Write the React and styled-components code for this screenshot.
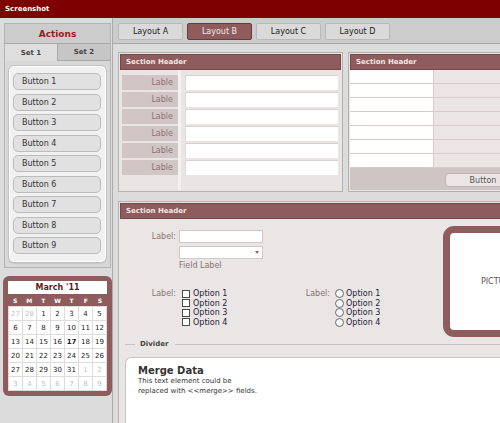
import React from "react";
import styled, { createGlobalStyle } from "styled-components";

const GlobalStyle = createGlobalStyle`
  html, body {
    margin: 0;
    padding: 0;
    overflow: hidden;
    background: #dcdcdc;
  }
  body {
    font-family: "DejaVu Sans", Verdana, sans-serif;
  }
  * {
    box-sizing: border-box;
  }
`;

const Screen = styled.div`
  width: 500px;
  height: 423px;
  overflow: hidden;
  display: flex;
  flex-direction: column;
  background: #dcdcdc;
`;

const TitleBar = styled.div`
  height: 18px;
  flex: none;
  background: #7f0000;
  color: #ffffff;
  font-weight: bold;
  font-size: 7px;
  padding-left: 5px;
  display: flex;
  align-items: center;
`;

const Workspace = styled.div`
  flex: 1;
  display: flex;
  min-height: 0;
`;

const Sidebar = styled.aside`
  width: 113px;
  flex: none;
  padding: 5px 1px 0 4px;
  border-right: 1px solid #ababab;
  display: flex;
  flex-direction: column;
  gap: 8px;
`;

const ActionsPanel = styled.div`
  border: 1px solid #b3b3b3;
  background: #d5d5d5;
`;

const ActionsTitle = styled.div`
  height: 20px;
  background: #cccccc;
  border-bottom: 1px solid #a8a8a8;
  color: #9a1c1c;
  font-weight: bold;
  font-size: 9px;
  display: flex;
  align-items: center;
  justify-content: center;
`;

const SetTabs = styled.div`
  display: flex;
  height: 17px;
`;

const SetTab = styled.div`
  flex: 1;
  display: flex;
  align-items: center;
  justify-content: center;
  font-size: 7px;
  font-weight: bold;
  color: #444;
  background: ${({ active }) => (active ? "#dedede" : "#c6c6c6")};
  border-left: ${({ active }) => (active ? "none" : "1px solid #a9a9a9")};
  border-bottom: ${({ active }) => (active ? "none" : "1px solid #a9a9a9")};
`;

const ListWrap = styled.div`
  padding: 4px 3px 4px 3px;
  background: #d8d8d8;
`;

const ButtonList = styled.div`
  background: #f1f1f1;
  border: 1px solid #c2c2c2;
  border-radius: 6px;
  box-shadow: inset 0 0 0 1px #ffffff, 0 1px 1px rgba(0, 0, 0, 0.08);
  padding: 7px 5px 8px 4px;
  display: flex;
  flex-direction: column;
  gap: 3.5px;
`;

const ActionButton = styled.div`
  height: 17px;
  background: #e1e1e1;
  border: 1px solid #bcbcbc;
  border-radius: 5px;
  font-size: 8px;
  color: #333;
  padding-left: 8px;
  display: flex;
  align-items: center;
`;

const Calendar = styled.div`
  width: 109px;
  margin-left: -1px;
  background: #8e5c5c;
  border-radius: 6px;
  padding: 5px;
`;

const CalTitle = styled.div`
  height: 13px;
  background: #ffffff;
  color: #5b1f1f;
  font-weight: bold;
  font-size: 8px;
  display: flex;
  align-items: center;
  justify-content: center;
`;

const CalHead = styled.div`
  display: grid;
  grid-template-columns: repeat(7, 1fr);
  height: 12px;
  align-items: center;
  color: #ffffff;
  font-size: 6px;
  font-weight: bold;
  text-align: center;
`;

const CalGrid = styled.div`
  display: grid;
  grid-template-columns: repeat(7, 13px);
  grid-auto-rows: 13px;
  gap: 1px;
  padding: 1px;
  background: #dddddd;
`;

const CalCell = styled.div`
  background: #ffffff;
  font-size: 7px;
  display: flex;
  align-items: center;
  justify-content: center;
  color: ${({ muted }) => (muted ? "#c2c2c2" : "#222")};
  font-weight: ${({ today }) => (today ? "bold" : "normal")};
`;

const Main = styled.main`
  flex: 1;
  min-width: 0;
  overflow: hidden;
  display: flex;
  flex-direction: column;
`;

const TabStrip = styled.div`
  height: 26px;
  flex: none;
  background: #cccccc;
  border-bottom: 1px solid #a9a9a9;
  padding: 5px 0 0 5px;
  display: flex;
  gap: 4px;
  align-items: flex-start;
`;

const LayoutTab = styled.div`
  width: 65px;
  flex: none;
  height: 17px;
  font-size: 8px;
  display: flex;
  align-items: center;
  justify-content: center;
  border-radius: 2px;
  border: 1px solid ${({ active }) => (active ? "#6a3b3b" : "#b9b9b9")};
  background: ${({ active }) => (active ? "#8e5c5c" : "#dadada")};
  color: ${({ active }) => (active ? "#f4eaea" : "#222")};
`;

const Content = styled.div`
  padding: 8px 0 0 5px;
  display: flex;
  flex-direction: column;
  gap: 9px;
  width: 470px;
`;

const PanelRow = styled.div`
  display: flex;
  gap: 5px;
`;

const Panel = styled.section`
  width: ${({ w }) => w}px;
  height: ${({ h }) => h}px;
  flex: none;
  border: 1px solid #b1b1b1;
  background: #e9e5e5;
  padding: 1px;
  display: flex;
  flex-direction: column;
`;

const PanelHeader = styled.div`
  height: 16px;
  flex: none;
  background: #8e5c5c;
  border: 1px solid #764747;
  color: #f1e6e6;
  font-size: 7px;
  font-weight: bold;
  padding-left: 5px;
  display: flex;
  align-items: center;
`;

const FormBody = styled.div`
  flex: 1;
  padding: 5px 0 0 2px;
  display: grid;
  grid-template-columns: 56px 153px;
  grid-auto-rows: 15px;
  column-gap: 7px;
  row-gap: 2px;
  align-content: start;
  background: linear-gradient(
      to right,
      transparent 58px,
      #f4f1f1 58px,
      #f4f1f1 61px,
      transparent 61px
    ),
    #e9e5e5;
`;

const LabelCell = styled.div`
  background: #d1c5c5;
  color: #8c7272;
  font-size: 8px;
  text-align: right;
  padding-right: 5px;
  line-height: 15px;
`;

const InputCell = styled.div`
  background: #ffffff;
  border-top: 1px solid #dccfcf;
  border-left: 1px solid #e3d8d8;
`;

const TableRows = styled.div`
  display: flex;
  flex-direction: column;
`;

const TableRow = styled.div`
  height: 14px;
  display: grid;
  grid-template-columns: 84px 1fr;
  border-bottom: 1px solid #dccaca;
`;

const TableCell = styled.div`
  background: ${({ alt }) => (alt ? "#ebe5e5" : "#ffffff")};
  border-right: ${({ alt }) => (alt ? "none" : "1px solid #dccaca")};
`;

const TableFooter = styled.div`
  flex: 1;
  background: #cfc5c5;
  padding: 5px 0 0 95px;
`;

const PlainButton = styled.div`
  width: 76px;
  height: 14px;
  border: 1px solid #c3b3b3;
  border-radius: 4px;
  background: #ebe6e6;
  color: #555;
  font-size: 8px;
  display: flex;
  align-items: center;
  justify-content: center;
`;

const SectionBody = styled.div`
  flex: 1;
  background: #ebe6e6;
  display: flex;
  flex-direction: column;
`;

const TopArea = styled.div`
  display: flex;
  padding-top: 7px;
`;

const FormArea = styled.div`
  width: 323px;
  flex: none;
  padding-top: 4px;
`;

const FieldRow = styled.div`
  display: grid;
  grid-template-columns: 56px 84px;
  column-gap: 3px;
`;

const FieldLabel = styled.div`
  font-size: 8px;
  color: #8a7070;
  text-align: right;
  line-height: ${({ lh }) => lh || 13}px;
`;

const FieldStack = styled.div`
  display: flex;
  flex-direction: column;
  gap: 3px;
`;

const TextBox = styled.div`
  height: 13px;
  background: #ffffff;
  border: 1px solid #d8c6c6;
`;

const SelectBox = styled(TextBox)`
  position: relative;

  &::after {
    content: "";
    position: absolute;
    right: 3px;
    top: 4px;
    border-left: 2.5px solid transparent;
    border-right: 2.5px solid transparent;
    border-top: 3px solid #8a6a6a;
  }
`;

const HintText = styled.div`
  font-size: 8px;
  color: #8a7070;
  margin-top: -1px;
`;

const OptionsRow = styled.div`
  display: flex;
  margin-top: 19px;
`;

const OptionGroup = styled.div`
  width: ${({ w }) => w}px;
  display: grid;
  grid-template-columns: 56px auto;
  column-gap: ${({ gap }) => gap}px;
  align-items: start;
`;

const OptionList = styled.div`
  display: flex;
  flex-direction: column;
`;

const Option = styled.div`
  height: 9.5px;
  display: flex;
  align-items: center;
  font-size: 8px;
  color: #1c1c36;
`;

const CheckMark = styled.span`
  width: 8px;
  height: 8px;
  border: 1px solid #4a4a4a;
  background: #ffffff;
  margin-right: 3px;
  flex: none;
`;

const RadioMark = styled.span`
  width: 9px;
  height: 9px;
  border: 1px solid #6a6a6a;
  border-radius: 50%;
  background: #f6f6f6;
  margin-right: 2px;
  flex: none;
`;

const Picture = styled.div`
  width: 110px;
  height: 111px;
  flex: none;
  border: 7px solid #8e5c5c;
  border-radius: 11px;
  background: #ffffff;
  display: flex;
  align-items: center;
  justify-content: center;
  color: #555;
  font-size: 8px;
`;

const Divider = styled.div`
  display: flex;
  align-items: center;
  padding-left: 5px;
  margin-top: 2px;
  height: 10px;
  font-size: 7px;
  font-weight: bold;
  color: #444;

  &::before {
    content: "";
    width: 10px;
    border-top: 1px solid #cbc3c3;
    margin-right: 5px;
  }

  &::after {
    content: "";
    flex: 1;
    border-top: 1px solid #cbc3c3;
    margin-left: 7px;
  }
`;

const MergeBox = styled.div`
  flex: 1;
  margin: 8px 0 0 5px;
  background: #ffffff;
  border: 1px solid #c9c3c3;
  border-right: none;
  border-bottom: none;
  border-radius: 6px 0 0 0;
  padding: 7px 12px;
  color: #333;
`;

const MergeTitle = styled.div`
  font-size: 10px;
  font-weight: bold;
  line-height: 12px;
`;

const MergeText = styled.div`
  font-size: 7px;
  line-height: 9.7px;
`;

const buttons = [1, 2, 3, 4, 5, 6, 7, 8, 9];
const layouts = ["Layout A", "Layout B", "Layout C", "Layout D"];
const options = ["Option 1", "Option 2", "Option 3", "Option 4"];

const calendarDays = [
  [27, true], [28, true], [1], [2], [3], [4], [5],
  [6], [7], [8], [9], [10], [11], [12],
  [13], [14], [15], [16], [17, false, true], [18], [19],
  [20], [21], [22], [23], [24], [25], [26],
  [27], [28], [29], [30], [31], [1, true], [2, true],
  [3, true], [4, true], [5, true], [6, true], [7, true], [8, true], [9, true],
];

const App = () => {
  return (
    <>
      <GlobalStyle />
      <Screen>
        <TitleBar>Screenshot</TitleBar>
        <Workspace>
          <Sidebar>
            <ActionsPanel>
              <ActionsTitle>Actions</ActionsTitle>
              <SetTabs>
                <SetTab active>Set 1</SetTab>
                <SetTab>Set 2</SetTab>
              </SetTabs>
              <ListWrap>
                <ButtonList>
                  {buttons.map((n) => (
                    <ActionButton key={n}>Button {n}</ActionButton>
                  ))}
                </ButtonList>
              </ListWrap>
            </ActionsPanel>
            <Calendar>
              <CalTitle>March '11</CalTitle>
              <CalHead>
                {["S", "M", "T", "W", "T", "F", "S"].map((d, i) => (
                  <span key={i}>{d}</span>
                ))}
              </CalHead>
              <CalGrid>
                {calendarDays.map(([day, muted, today], i) => (
                  <CalCell key={i} muted={muted} today={today}>
                    {day}
                  </CalCell>
                ))}
              </CalGrid>
            </Calendar>
          </Sidebar>
          <Main>
            <TabStrip>
              {layouts.map((l) => (
                <LayoutTab key={l} active={l === "Layout B"}>
                  {l}
                </LayoutTab>
              ))}
            </TabStrip>
            <Content>
              <PanelRow>
                <Panel w={225} h={140}>
                  <PanelHeader>Section Header</PanelHeader>
                  <FormBody>
                    {[0, 1, 2, 3, 4, 5].map((i) => (
                      <React.Fragment key={i}>
                        <LabelCell>Lable</LabelCell>
                        <InputCell />
                      </React.Fragment>
                    ))}
                  </FormBody>
                </Panel>
                <Panel w={225} h={140}>
                  <PanelHeader>Section Header</PanelHeader>
                  <TableRows>
                    {[0, 1, 2, 3, 4, 5, 6].map((i) => (
                      <TableRow key={i}>
                        <TableCell />
                        <TableCell alt />
                      </TableRow>
                    ))}
                  </TableRows>
                  <TableFooter>
                    <PlainButton>Button</PlainButton>
                  </TableFooter>
                </Panel>
              </PanelRow>
              <Panel w={455} h={240}>
                <PanelHeader>Section Header</PanelHeader>
                <SectionBody>
                  <TopArea>
                    <FormArea>
                      <FieldRow>
                        <FieldLabel>Label:</FieldLabel>
                        <FieldStack>
                          <TextBox />
                          <SelectBox />
                          <HintText>Field Label</HintText>
                        </FieldStack>
                      </FieldRow>
                      <OptionsRow>
                        <OptionGroup w={154} gap={6}>
                          <FieldLabel lh={9.5}>Label:</FieldLabel>
                          <OptionList>
                            {options.map((o) => (
                              <Option key={o}>
                                <CheckMark />
                                {o}
                              </Option>
                            ))}
                          </OptionList>
                        </OptionGroup>
                        <OptionGroup w={160} gap={5}>
                          <FieldLabel lh={9.5}>Label:</FieldLabel>
                          <OptionList>
                            {options.map((o) => (
                              <Option key={o}>
                                <RadioMark />
                                {o}
                              </Option>
                            ))}
                          </OptionList>
                        </OptionGroup>
                      </OptionsRow>
                    </FormArea>
                    <Picture>PICTURE</Picture>
                  </TopArea>
                  <Divider>Divider</Divider>
                  <MergeBox>
                    <MergeTitle>Merge Data</MergeTitle>
                    <MergeText>This text element could be</MergeText>
                    <MergeText>replaced with &lt;&lt;merge&gt;&gt; fields.</MergeText>
                  </MergeBox>
                </SectionBody>
              </Panel>
            </Content>
          </Main>
        </Workspace>
      </Screen>
    </>
  );
};

export default App;
